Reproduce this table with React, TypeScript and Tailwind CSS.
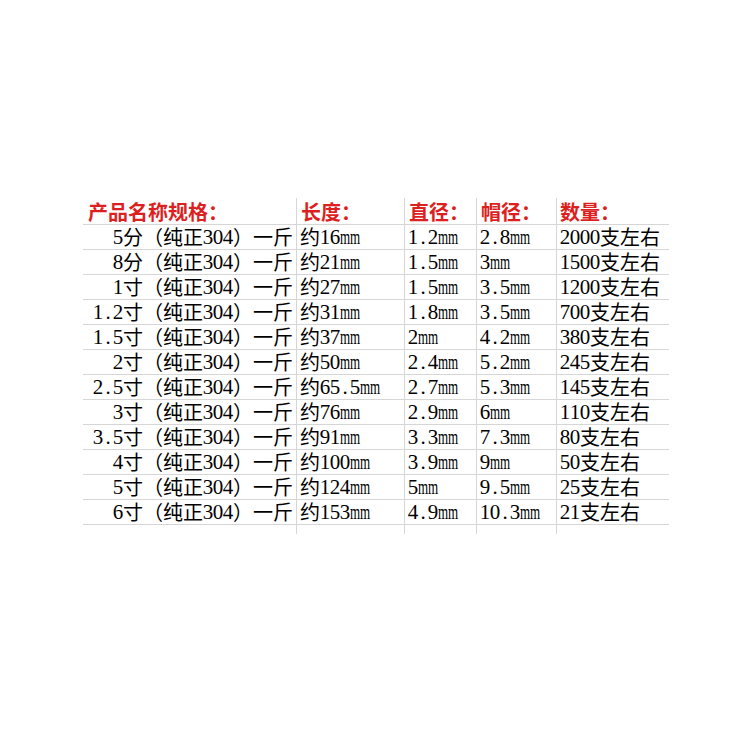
import React from 'react';

const HEADERS = ['产品名称规格：', '长度：', '直径：', '帽径：', '数量：'];

const ROWS: string[][] = [
  ['5分', '约16mm', '1.2mm', '2.8mm', '2000'],
  ['8分', '约21mm', '1.5mm', '3mm', '1500'],
  ['1寸', '约27mm', '1.5mm', '3.5mm', '1200'],
  ['1.2寸', '约31mm', '1.8mm', '3.5mm', '700'],
  ['1.5寸', '约37mm', '2mm', '4.2mm', '380'],
  ['2寸', '约50mm', '2.4mm', '5.2mm', '245'],
  ['2.5寸', '约65.5mm', '2.7mm', '5.3mm', '145'],
  ['3寸', '约76mm', '2.9mm', '6mm', '110'],
  ['3.5寸', '约91mm', '3.3mm', '7.3mm', '80'],
  ['4寸', '约100mm', '3.9mm', '9mm', '50'],
  ['5寸', '约124mm', '5mm', '9.5mm', '25'],
  ['6寸', '约153mm', '4.9mm', '10.3mm', '21'],
];

// half-width characters get a fixed 10px box, like a monospaced song-ti font
const Glyphs = ({ text }: { text: string }) => (
  <>
    {Array.from(text).map((ch, i) =>
      ch.charCodeAt(0) < 128 ? (
        <span key={i} className="inline-flex w-[10px] justify-center overflow-visible font-['Liberation_Serif',serif] text-[21px]">
          <span className={ch === 'm' ? 'inline-block scale-x-[0.62]' : 'inline-block'}>{ch}</span>
        </span>
      ) : (
        <span key={i}>{ch}</span>
      )
    )}
  </>
);

const cell = 'flex items-center border-b border-r border-[#d6d6d6] h-[25px]';

export default function App() {
  return (
    <div className="w-[750px] h-[750px] bg-white pt-[198px] pl-[83px] font-['Noto_Sans_CJK_SC',sans-serif] text-[20px] leading-none text-black">
      <div className="grid grid-cols-[214px_108px_72px_80px_112px]">
        {HEADERS.map((h, i) => (
          <div
            key={h}
            className={`flex items-center h-[27px] pt-[1px] border-b border-[#d6d6d6] font-bold text-[#dc1f1f] ${
              i === 0 ? 'pl-[5px] border-r' : i < 4 ? 'pl-[4px] border-r' : 'pl-[3px]'
            }`}
          >
            {h}
          </div>
        ))}
        {ROWS.map((r, ri) => (
          <React.Fragment key={ri}>
            <div className={`${cell} justify-end pr-[3px]`}>
              <Glyphs text={`${r[0]}（纯正304）一斤`} />
            </div>
            <div className={`${cell} pl-[3px]`}>
              <Glyphs text={r[1]} />
            </div>
            <div className={`${cell} pl-[3px]`}>
              <Glyphs text={r[2]} />
            </div>
            <div className={`${cell} pl-[3px]`}>
              <Glyphs text={r[3]} />
            </div>
            <div className="flex items-center border-b border-[#d6d6d6] h-[25px] pl-[3px]">
              <Glyphs text={`${r[4]}支左右`} />
            </div>
          </React.Fragment>
        ))}
        <div className="h-[9px] border-r border-[#d6d6d6]" />
        <div className="h-[9px] border-r border-[#d6d6d6]" />
        <div className="h-[9px] border-r border-[#d6d6d6]" />
        <div className="h-[9px] border-r border-[#d6d6d6]" />
        <div className="h-[9px]" />
      </div>
    </div>
  );
}
